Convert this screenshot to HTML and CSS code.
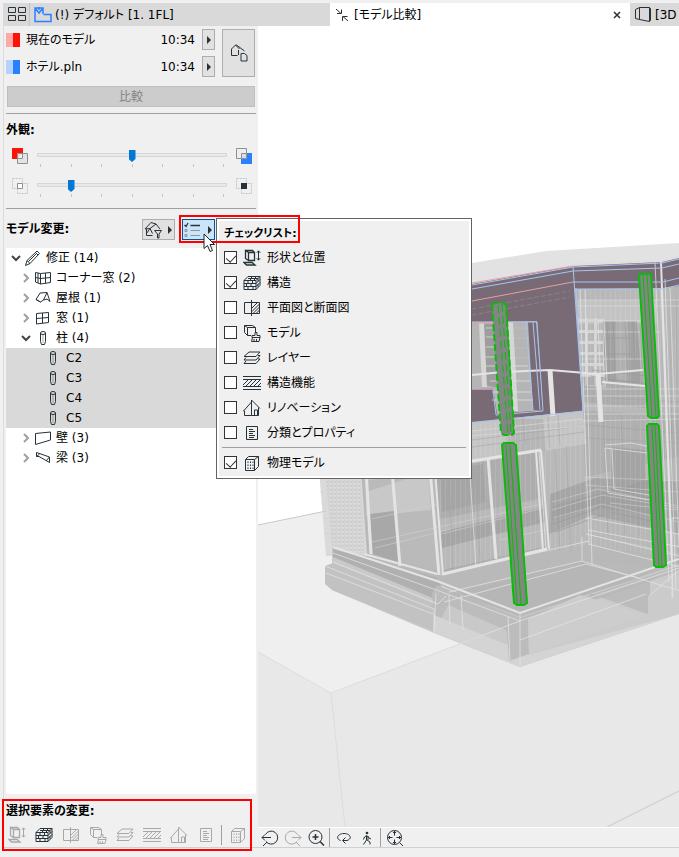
FILE: index.html
```
<!DOCTYPE html>
<html lang="ja">
<head>
  <meta charset="UTF-8">
  <meta name="viewport" content="width=device-width, initial-scale=1.0">
  <title>モデル比較</title>
  <link rel="stylesheet" href="styles.css">
</head>
<body>
  <!-- shared icons -->
  <svg class="sprite" aria-hidden="true">
    <symbol id="i-shape" viewBox="0 0 18 18"><path stroke-width="1.300" d="M5.500 3.500h6v8h-6zM5.500 3.500l-3-2v8l3 2M2.500 1.500h7l2 2M1 13.500h8l3 2.500H3.500z"/><path d="M15.500 2v9M13.800 3.800l1.700-2 1.700 2M13.800 9.200l1.700 2 1.700-2"/></symbol>
    <symbol id="i-brick" viewBox="0 0 18 18"><path d="M1 6.500h12v9H1zM1 9.500h12M1 12.500h12M5 6.500v3M9.500 6.500v3M3.500 9.500v3M8 9.500v3M5 12.500v3M10 12.500v3M1 6.500l4-4h12l-4 4M17 2.500v9l-4 4M5 4.500h10M9 2.500l-2 4M13 2.500l-2 4M13 9.500l4-4M13 12.500l4-4M15 4.500v3M15 10v3"/></symbol>
    <symbol id="i-plan" viewBox="0 0 18 18"><path d="M9 3.500H1.500v11H9M8.500 1v16M8.500 3.500h8v11h-8M9 9l5.500-5.500M9 12.500l7.500-7.500M10 14.500l6.500-6.500M13 14.500l3.500-3.500"/></symbol>
    <symbol id="i-model" viewBox="0 0 18 18"><path d="M8 11.500H4.500v-8h8V8M4.500 3.500l-3-2h8l3 2M1.500 1.500v7l3 3M12 8.500v3H9v2h8v-2h-3v-3zM9.500 13.500l-1 4H16l1-4M11 17v-2M13.500 17v-2"/></symbol>
    <symbol id="i-layer" viewBox="0 0 18 18"><path d="M1 7.500l5-4.500h11l-4 4.500zM3 8.500l-2 2.500h12l4-4.500h-2M3 12l-2 2.500h12l4-4.500h-2"/></symbol>
    <symbol id="i-func" viewBox="0 0 18 18"><path d="M0 2.500h18M0 5.500h18M0 12.500h18M0 15.500h18M0 11l5-5M3 12l6-6M7 12l6-6M11 12l6-6M15 12l3-3"/></symbol>
    <symbol id="i-reno" viewBox="0 0 18 18"><path d="M8.500 1v15.500H1.500V12h-1l8-9M8.500 1l8.500 8.500M15.500 8.500v8h-7M11.500 16v-5h3v5"/></symbol>
    <symbol id="i-list" viewBox="0 0 18 18"><path d="M3.500 2.500h11v13h-11zM6 5.500h4M6 7.500h6M6 9.500h4M6 11.500h6M6 13.500h5"/></symbol>
    <symbol id="i-phys" viewBox="0 0 18 18"><path d="M2.500 5.500h9v11h-9zM2.500 5.500l3-3h10l-4 3M15.500 2.500v10l-4 4"/><path stroke-dasharray="1.500 1.500" d="M5 7.500v8M7.500 7.500v8M10 7.500v8"/></symbol>
    <symbol id="i-column" viewBox="0 0 18 18"><path d="M6.500 4v8.500l1 3h3l1-3V4"/><ellipse cx="9" cy="4" rx="2.500" ry="1.500"/><path stroke-opacity=".4" d="M9 6v8"/></symbol>
    <symbol id="i-open" viewBox="0 0 10 10"><path stroke-width="2" d="M1 3l4 4 4-4"/></symbol>
    <symbol id="i-closed" viewBox="0 0 10 10"><path stroke-width="2" d="M3 1l4 4-4 4"/></symbol>
    <symbol id="i-arrow" viewBox="0 0 6 8"><path class="solid" d="M1 0l4 4-4 4z"/></symbol>
  </svg>

  <nav class="tabs">
    <button class="tab-grid" aria-label="タブ一覧">
      <svg width="18" height="15" viewBox="0 0 18 15"><path d="M.5.5h7v5h-7zM10.500.5h7v5h-7zM.5 8.500h7v5h-7zM10.500 8.500h7v5h-7z"/></svg>
    </button>
    <a href="#" class="tab">
      <svg class="blue" width="18" height="18" viewBox="0 0 18 18"><path stroke-width="1.500" d="M9 8V2H1v13.500h16V8.500H9.500M1 2l4 5 4-5M5 1v3"/></svg>
      <span>(!) デフォルト [1. 1FL]</span>
    </a>
    <div class="tab active">
      <svg width="16" height="16" viewBox="0 0 16 16"><path d="M2 2l5 4.500M7.500 2.500v4H3M14 14L9 9.500M13.500 9.500h-5v4.500"/></svg>
      <span>[モデル比較]</span>
      <button class="tab-close" aria-label="閉じる"><svg width="8" height="8" viewBox="0 0 8 8"><path stroke-width="1.500" d="M1 1l6 6M7 1L1 7"/></svg></button>
    </div>
    <a href="#" class="tab tab-last">
      <svg width="18" height="18" viewBox="0 0 18 18"><path d="M1.500 3.500l4-2h10v14l-10-2-4-1zM5.500 1.500v12M15.500 1.500l1 1v12l-1 1"/></svg>
      <span>[3D</span>
    </a>
  </nav>

  <main class="workspace">
    <aside class="panel">
      <div class="models">
        <div class="model">
          <i class="swatch red"></i><span class="name">現在のモデル</span><span>10:34</span>
          <button class="btn step" aria-label="現在のモデルを選択"><svg width="6" height="8"><use href="#i-arrow"/></svg></button>
        </div>
        <div class="model">
          <i class="swatch sky"></i><span class="name">ホテル.pln</span><span>10:34</span>
          <button class="btn step" aria-label="ファイルを選択"><svg width="6" height="8"><use href="#i-arrow"/></svg></button>
        </div>
        <button class="btn swap" aria-label="入れ替え">
          <svg width="18" height="18" viewBox="0 0 18 18"><path d="M1.500 11.500V5l4-4 4 4M1.500 11.500h6M8.500 11V6M5.500 1h1l8 6M11.500 9.500h3l2.500 2v5.500h-6v-7.500z"/></svg>
        </button>
      </div>
      <button class="btn compare" disabled>比較</button>

      <hr>
      <h2 class="look">外観:</h2>
      <div class="slider-row">
        <svg width="16" height="16" viewBox="0 0 16 16"><path fill="#ff1008" stroke="none" d="M0 0h11v5H5v6H0z"/><path fill="#e3e3e3" stroke="#8b9296" d="M5.500 5.500h10v10h-10zM5.500 10.500h5v-5"/></svg>
        <div class="slider">
          <input type="range" min="0" max="6" value="3" aria-label="モデルの色">
          <div class="ticks"><i></i><i></i><i></i><i></i><i></i><i></i><i></i></div>
        </div>
        <svg width="16" height="16" viewBox="0 0 16 16"><path fill="#2b80ff" stroke="none" d="M5 5h11v11H5z"/><path fill="#eee" stroke="#8b9296" d="M.5.5h10v10H.5z"/><path fill="#ddd" stroke="#8b9296" d="M5.500 5.500h5v5h-5z"/></svg>
      </div>
      <div class="slider-row">
        <svg width="16" height="16" viewBox="0 0 16 16"><path stroke="#c4c4c4" stroke-dasharray="2 1" d="M.5.5h10v10H.5zM5.500 5.500h10v10h-10z"/><path fill="#fff" stroke="#8b9296" d="M5.500 5.500h5v5h-5z"/></svg>
        <div class="slider">
          <input type="range" min="0" max="6" value="1" aria-label="共通部分の濃さ">
          <div class="ticks"><i></i><i></i><i></i><i></i><i></i><i></i><i></i></div>
        </div>
        <svg width="16" height="16" viewBox="0 0 16 16"><path stroke="#c4c4c4" stroke-dasharray="2 1" d="M.5.5h10v10H.5zM5.500 5.500h10v10h-10z"/><path fill="#263238" stroke="none" d="M5 5h6v6H5z"/></svg>
      </div>

      <hr class="second">
      <div class="changes">
        <h2>モデル変更:</h2>
        <button class="btn drop" aria-label="フィルター">
          <svg width="18" height="18" viewBox="0 0 18 18"><path d="M1 8l6-6.500L12 3l4 5M1 8l5-.5L12 3M6 7.500l2.500 5M2.500 8v6.500h6M6 7.500l-3.500 5M10.500 9.500h7l-2.500 3.500v4h-1.500v-4z"/></svg>
          <svg width="6" height="8"><use href="#i-arrow"/></svg>
        </button>
        <div class="anchor">
          <button class="btn drop on" aria-label="チェックリスト">
            <svg width="18" height="18" viewBox="0 0 18 18"><path stroke-width="1.300" d="M.5 4L2 5.500 4 2M6.500 4.500H16"/><path stroke="#87959d" d="M1 8.500h2v2H1zM1 13.500h2v2H1zM6.500 9.500H16M6.500 14.500H16"/></svg>
            <svg width="6" height="8"><use href="#i-arrow"/></svg>
          </button>
          <div class="menu">
            <h2>チェックリスト:</h2>
            <label><input type="checkbox" checked><svg><use href="#i-shape"/></svg>形状と位置</label>
            <label><input type="checkbox" checked><svg><use href="#i-brick"/></svg>構造</label>
            <label><input type="checkbox"><svg><use href="#i-plan"/></svg>平面図と断面図</label>
            <label><input type="checkbox"><svg><use href="#i-model"/></svg>モデル</label>
            <label><input type="checkbox"><svg><use href="#i-layer"/></svg>レイヤー</label>
            <label><input type="checkbox"><svg><use href="#i-func"/></svg>構造機能</label>
            <label><input type="checkbox"><svg><use href="#i-reno"/></svg>リノベーション</label>
            <label><input type="checkbox"><svg><use href="#i-list"/></svg>分類とプロパティ</label>
            <hr>
            <label><input type="checkbox" checked><svg><use href="#i-phys"/></svg>物理モデル</label>
          </div>
          <div class="mark mark-menu"></div>
          <svg class="cursor" width="13" height="20" viewBox="0 0 13 20"><path d="M1 1v14.500l3.500-3 2.500 6 2.500-1-2.500-6H11.500z"/></svg>
        </div>
      </div>

      <ul class="tree">
        <li><button aria-label="閉じる"><svg><use href="#i-open"/></svg></button><svg viewBox="0 0 18 18"><path d="M1.500 16.500l1.500-5L13 2l2.500 2.500L6 14.500zM3 11.500l3 3M11.500 3.500L14 6M4.500 12.500l8-8"/></svg>修正 (14)</li>
        <li class="l2 closed"><button aria-label="開く"><svg><use href="#i-closed"/></svg></button><svg viewBox="0 0 18 18"><path d="M1.500 3.500l5 1 10-1v10l-10 1.500-5-2zM6.500 4.500V15M11.500 4v10M1.500 8.500l5 1 10-1M4 4v10"/></svg>コーナー窓 (2)</li>
        <li class="l2 closed"><button aria-label="開く"><svg><use href="#i-closed"/></svg></button><svg viewBox="0 0 18 18"><path d="M2 10.500L6 4l7-.5L9.500 11l-3 2zM13 3.500l3 9-3-2.500-3.500 1M2 10.500l4.500 2.500"/></svg>屋根 (1)</li>
        <li class="l2 closed"><button aria-label="開く"><svg><use href="#i-closed"/></svg></button><svg viewBox="0 0 18 18"><path d="M2.500 4.500l12-1v10l-12 1.500zM8.500 4v10M2.500 9.500l12-1"/></svg>窓 (1)</li>
        <li class="l2"><button aria-label="閉じる"><svg><use href="#i-open"/></svg></button><svg><use href="#i-column"/></svg>柱 (4)</li>
        <li class="l3"><svg><use href="#i-column"/></svg>C2</li>
        <li class="l3"><svg><use href="#i-column"/></svg>C3</li>
        <li class="l3"><svg><use href="#i-column"/></svg>C4</li>
        <li class="l3"><svg><use href="#i-column"/></svg>C5</li>
        <li class="l2 closed"><button aria-label="開く"><svg><use href="#i-closed"/></svg></button><svg viewBox="0 0 18 18"><path d="M1.500 4.500L16.500 3v8l-15 4.500z"/></svg>壁 (3)</li>
        <li class="l2 closed"><button aria-label="開く"><svg><use href="#i-closed"/></svg></button><svg viewBox="0 0 18 18"><path d="M2.500 3.500l13 4.500v5.500L5 7.500H2.500zM2.500 7.500l3-2.500M12 12l3.500-4"/></svg>梁 (3)</li>
      </ul>

      <div class="selected">
        <h2>選択要素の変更:</h2>
        <div class="icons">
          <button disabled aria-label="形状と位置"><svg><use href="#i-shape"/></svg></button>
          <button aria-label="構造"><svg><use href="#i-brick"/></svg></button>
          <button disabled aria-label="平面図と断面図"><svg><use href="#i-plan"/></svg></button>
          <button disabled aria-label="モデル"><svg><use href="#i-model"/></svg></button>
          <button disabled aria-label="レイヤー"><svg><use href="#i-layer"/></svg></button>
          <button disabled aria-label="構造機能"><svg><use href="#i-func"/></svg></button>
          <button disabled aria-label="リノベーション"><svg><use href="#i-reno"/></svg></button>
          <button disabled aria-label="分類とプロパティ"><svg><use href="#i-list"/></svg></button>
          <i class="sep"></i>
          <button disabled aria-label="物理モデル"><svg><use href="#i-phys"/></svg></button>
        </div>
        <div class="mark mark-selected"></div>
      </div>
    </aside>

    <section class="view">
      <div class="scene">
        <svg viewBox="258 26 421 801" preserveAspectRatio="xMinYMin slice">
          <defs>
            <pattern id="mesh" width="4" height="4" patternUnits="userSpaceOnUse"><path d="M0 0l4 3M0 3l4-2" stroke="#cbcbcb" fill="none"/></pattern>
            <pattern id="slats" width="5" height="4" patternUnits="userSpaceOnUse"><path d="M.5 0v4" stroke="#fff" stroke-opacity=".1" fill="none"/></pattern>
            <pattern id="blocks" width="9" height="11" patternUnits="userSpaceOnUse"><path d="M0 1.500h9M1.500 0v11" stroke="#d4d4d4" stroke-width="3" fill="none"/></pattern>
          </defs>
          <g stroke="none">
            <!-- ground -->
            <path fill="#efefef" d="M258 525l68-14 353-60v118L331 693l-73-41z"/>
            <path fill="#e8e8e8" d="M258 652l73 41 189-72 159-60v266H258z"/>
            <!-- roof slab -->
            <path fill="#e2e2e2" d="M400 276l72-13 74-12 133-8v16l-17 4-89 3-101 19z"/>
            <!-- house volume -->
            <path fill="#b9b9b9" d="M320 470l152-48 111-11 96 0v155l-159 52-83-34-105-29z"/>
            <path fill="#b8b8b8" d="M575 288h88l16-3v285l-87-10z"/>
            <path fill="#dadada" d="M319 470h42l6 86-34-8v8h-7z"/>
            <path fill="url(#mesh)" d="M325 470h35l5 84-33-7z"/>
            <path fill="#bababa" d="M362 470h68l7 99-67-15z"/>
            <path fill="#c8c8c8" d="M366 492l62-20 3 38-65 6z"/>
            <path fill="#a8a8a8" d="M370 514l24-3 4 51-25-8z"/>
            <path fill="#adadad" d="M436 470l102-18 8 96-103 24z"/>
            <path fill="#a5a5a5" d="M440 472l43-8 3 38-44 10z"/>
            <path fill="#b9b9b9" d="M440 519l103-21 4 48-104 24z"/>
            <path fill="#a6a6a6" d="M441 532l102-25 2 15-103 26z"/>
            <path fill="#a6a6a6" d="M550 494l45-16 84 3v53l-87-19-43 19z"/>
            <path fill="#b0b0b0" d="M583 411l96 4v42l-94 20z"/>
            <path fill="#c5c5c5" d="M472 422l111-11 3 33-114 19z"/>
            <path fill="#b6b6b6" d="M507 419h36l3 32-37 3z"/>
            <path fill="#c3c3c3" d="M577 300h80v24h-79z"/>
            <path fill="url(#blocks)" d="M577 318h27l2 70-25-3z"/>
            <path fill="#a2a2a2" d="M603 321h34l5 62-37-2z"/>
            <path fill="#b0b0b0" d="M616 321h12l1 61h-13z"/>
            <path fill="#a4a4a4" d="M612 447l33 3 1 45-35-5z"/>
            <path fill="#929292" fill-opacity=".3" d="M582 376l74 8v25l-72-7zM553 506l102-28v37l-63-8-40 13z"/>
            <path fill="url(#slats)" d="M436 425l244-11v145l-90-14-150 25zM577 290h102v120h-98z"/>
            <!-- fascia -->
            <path fill="#796b76" d="M400 297l72-13 101-18 89-4 17-4v28l-16 2-88 1 8 122-183 18z"/>
            <path fill="#b5b5b5" d="M472 322l65-1 6 89-46 4-4-26-21 1z"/>
            <path fill="#9d9d9d" d="M484 324h12l2 64-12-3z"/>
            <path fill="#d6d6d6" d="M479 323h5l3 64h-5zM508 322h5l5 89h-5z"/>
            <path fill="#796b76" d="M528 322h8l7 88h-10z"/>
            <!-- base plates -->
            <path fill="#c9c9c9" d="M332 547l105 38 83 32 159-53v50l-159 53-86-34-102-43z"/>
            <path fill="#c2c2c2" d="M325 566l8-3 101 41v27l-102-41-7-6z"/>
            <path fill="#b0b0b0" d="M333 549l104 29 10 20-12 1-102-42z"/>
            <path fill="#bcbcbc" d="M437 585l83 33 159-52v14l-159 56-72-31-13 26-3-38z"/>
            <path fill="#d4d4d4" d="M434 615l86 35 159-53v17l-159 53-86-34z"/>
            <path fill="#cbcbcb" d="M525 624l154-53v43l-151 41z"/>
            <path fill="#b5b5b5" fill-opacity=".7" d="M448 594l134-33 59 17-121 36zM590 600l60-20v35l-61-22z"/>
            <path fill="#bcbcbc" d="M506 620l22-2 1 36-20 7z"/>
            <path fill="#cdcdcd" d="M580 595l67 20-118 39-1-35z"/>
          </g>
          <!-- model edges -->
          <g fill="none" stroke="#c9c9c9">
            <path d="M258 525l68-14M607 827l72-36"/>
            <path stroke="#dcdcdc" d="M258 652l73 41 189-72M331 693l14 134"/>
            <path stroke="#d0d0d0" stroke-opacity=".6" d="M320 492l5 1M323 518l6 1M324 533l6 1M366 480l64-8M372 519l65-15M438 535l105-27M372 542l170-38M375 548l76-19M500 540l45-10M552 502l46-13 81 17M552 510l50-15 77 13M553 518l49-14 77 18M585 477l94 4M585 485l94 7M610 503l69 7M590 535l89 19"/>
            <path stroke="#a2a2a2" stroke-opacity=".5" d="M472 440l110-14M472 447l112-15M507 449l-2-29M525 445l-2-28M550 448l-2-31M560 446l-2-31M566 446l5 105M555 449l5 102M603 415l5 120M621 415l4 120M635 415l4 120M670 290l3 274M676 290l3 274M612 398l67 4M585 425l94 8M585 438l94 5M449 480l4 90M475 465l5 95M517 455l6 78"/>
            <path stroke="#ddd" stroke-opacity=".6" d="M578 300h101M578 306h101M580 332h80M582 359h75M584 389h95M584 396h95M584 406h95M584 414h95M582 421l97-2M472 431l111-12M472 436l112-10"/>
            <path stroke="#9a9a9a" stroke-opacity=".7" d="M607 322l3 61M613 322l3 61M625 322l3 61M633 322l3 61M604 338h28M604 354h28M640 322l3 61M592 370l64 7M590 376l62 9M553 524l46-16M555 532l47-17M610 512l45 10"/>
          </g>
          <g fill="none" stroke="#e4e4e4">
            <path stroke-width="3" d="M366 470l5 84M392 470l8 96M430 470l9 105M488 458l8 101M472 461l69-11M443 574l104-25"/>
            <path stroke-width="2" d="M364 554l73 20M435 470l8 105M536 451l7 99M541 450l8 99M333 547l104 34 83 32 159-54"/>
            <path stroke-opacity=".75" d="M539 451l7 99M441 575l108-25 40-9M333 553l106 38 81 30 159-53M449 592l133-31 98 30M444 602l142-38 53 14M325 566l109 43v23M326 573l107 41M333 562l105 42 8-8M461 595l2 35M508 617l2 43M520 613v53M520 640l126-46M588 544l93 23M586 518l93 16M586 534l93 22M588 530l93 17M582 537v24M470 475l6 92"/>
            <path stroke-opacity=".75" d="M585 289l7 275M580 289l9 255M655 262l14 320M661 288l12 310M665 279l11 310M670 288l9 260M598 321h42M598 321l3 72M604 321l3 60M602 382l44 4M605 448l42 5M605 448l3 45 41 7M612 449l2 40 35 6M605 445l26-2 20 4M672 518h7M672 518v80M679 570l-30 26v19M436 593l-2 38M449 595l1 30"/>
            <path stroke-width="2" d="M472 375l31-3 47-2 47 4 46-4M602 382l43 4M661 262l11 300"/>
            <path stroke-width="5" d="M550 370l3 46M598 374l3 48"/>
            <path stroke-dasharray="3 1" stroke-width="3" d="M646 370l3 46"/>
            <path stroke-opacity=".7" d="M486 328h20M486 337h20M486 347h20M486 357h20M486 366h42M490 381h41M492 392h40M492 400h41"/>
            <path stroke="#bdbdbd" d="M515 328h12M515 338h12M515 348h12M515 358h12"/>
          </g>
          <g fill="none" stroke="#a9c4ee">
            <path d="M472 285l101-18 89-4 17-4M472 289l101-18 89-3 17-4M573 282h90l16-4M575 289h87l17-4M472 322h65l6 89-47 4-3-26h-21M526 322l7 88M533 322l7 88M573 266l10 145M576 288l7 124M472 423l111-12"/>
            <path stroke="#e2a0a4" d="M472 283l101-17M472 301l101-19M472 389h21M472 323h20"/>
            <path stroke="#e6dada" stroke-dasharray="6 3" d="M573 264l89-3 17-5"/>
            <path stroke="#8b7f89" stroke-dasharray="5 2" d="M472 309l98-18M472 315l98-18"/>
          </g>
          <!-- columns -->
          <g class="columns">
            <path stroke-dasharray="7 3" d="M492 305l3-2h8l3 2 8 128-2 2h-8l-3-2z"/>
            <path d="M502 445l2-2h9l3 2 11 158-3 2h-7l-3-2z"/>
            <path d="M639 275l2-1h8l2 1 8 141-2 2h-6l-3-2z"/>
            <path d="M647 426l2-2h8l2 2 7 139-3 2h-7l-2-2z"/>
            <path class="rib" d="M506 445l11 159M510 445l11 159M643 275l9 142M647 275l9 142M652 425l7 141M655 425l7 141M506 303l8 130"/>
            <path class="rib" stroke-dasharray="8 4" d="M498 305l10 129M502 304l9 129"/>
          </g>
        </svg>
      </div>
      <div class="nav-bar">
        <button aria-label="前の表示"><svg viewBox="0 0 18 18"><path d="M5 12.500a6.500 6.500 0 1 0-.5-7M1 8.500h9M4 5.500l-3 3 3 3M6 13l-4 4"/></svg></button>
        <button aria-label="次の表示" disabled><svg viewBox="0 0 18 18"><path d="M13 12.500a6.500 6.500 0 1 1 .5-7M17 8.500H8M14 5.500l3 3-3 3M12 13l4 4"/></svg></button>
        <button aria-label="拡大"><svg viewBox="0 0 18 18"><circle cx="8.500" cy="8" r="6.500"/><path stroke-width="1.500" d="M5.500 8h6M8.500 5v6M13 12.500l4 4"/></svg></button>
        <i class="sep"></i>
        <button aria-label="オービット"><svg viewBox="0 0 18 18"><path d="M5.500 11.500C0 9.500 3 4.500 9 4.500s9 5 3 7H8M10.500 8.500l-3 3 3 3"/></svg></button>
        <button aria-label="ウォーク"><svg viewBox="0 0 18 18"><circle class="solid" cx="9" cy="4" r="1.300"/><path d="M8.500 7v4l-3 4.500M9 11l3 2v2.500M5.500 10.500l1-2.500L9 6.500l2 2.500 2 1M10 7v4"/></svg></button>
        <i class="sep"></i>
        <button aria-label="全体表示"><svg viewBox="0 0 18 18"><circle cx="8.500" cy="8.500" r="7"/><path d="M8.500 2v4.500M8.500 10.500V15M2 8.500h4.500M10.500 8.500H15M13.500 13.500l3.500 3.500M7 4l1.500-1.500L10 4M7 13l1.500 1.500L10 13M4 7L2.500 8.500 4 10M13 7l1.500 1.500L13 10"/></svg></button>
      </div>
    </section>
  </main>
  <footer class="status"></footer>
</body>
</html>
```
FILE: styles.css
```
* {
  box-sizing: border-box;
}

body {
  display: flex;
  flex-direction: column;
  min-height: 100vh;
  margin: 0;
  padding: 3px 0 0 3px;
  background: #f0f0f0;
  color: #000;
  font-family: "DejaVu Sans", "Noto Sans CJK JP", sans-serif;
  font-size: 12px;
  line-height: 20px;
  font-feature-settings: "palt";
  overflow-x: hidden;
}

button {
  display: flex;
  align-items: center;
  justify-content: center;
  padding: 0;
  border: none;
  background: none;
  color: inherit;
  font: inherit;
}

h2 {
  margin: 0;
  font-size: 12px;
  font-weight: bold;
}

hr {
  width: 100%;
  height: 1px;
  margin: 6px 0;
  border: none;
  background: #a0a0a0;
}

svg {
  flex: none;
  fill: none;
  stroke: #263238;
}

.solid {
  fill: #263238;
  stroke: none;
}

.sprite {
  position: absolute;
  width: 0;
  height: 0;
}

.sep {
  width: 1px;
  background: #a0a0a0;
}

/* tabs */
.tabs {
  display: flex;
  height: 23px;
  padding-left: 1px;
  background: #d9d9d9;
  overflow: hidden;
}

.tab-grid {
  flex: none;
  width: 26px;
  border-right: 1px solid #c3c3c3;
}

.tab {
  display: flex;
  flex: 0 0 300px;
  align-items: center;
  gap: 3px;
  padding-left: 4px;
  color: #000;
  text-decoration: none;
  white-space: nowrap;
}

.tab.active {
  gap: 4px;
  background: #fff;
}

.tab-last {
  flex: 1;
}

.tab-close {
  width: 26px;
  margin-left: auto;
}

.blue {
  stroke: #2b80ff;
}

/* layout */
.workspace {
  display: grid;
  flex: 1;
  grid-template-columns: 255px 1fr;
}

.panel {
  display: flex;
  flex-direction: column;
  padding: 3px 2px 0;
  border-left: 1px solid #dcdcdc;
}

.status {
  height: 10px;
  border-top: 1px solid #d0d0d0;
}

.btn {
  height: 21px;
  border: 1px solid #adadad;
  background: #e1e1e1;
}

/* compared models */
.models {
  display: grid;
  grid-template-columns: 1fr 33px;
  gap: 6px 7px;
  padding-right: 1px;
}

.model {
  display: flex;
  grid-column: 1;
  align-items: center;
}

.name {
  flex: 1;
}

.swatch {
  width: 14px;
  height: 14px;
  margin-right: 6px;
}

.swatch.red {
  background: linear-gradient(90deg, #ffa9a7 50%, #ff1008 50%);
}

.swatch.sky {
  background: linear-gradient(90deg, #b5d3ff 50%, #2b80ff 50%);
}

.step {
  width: 13px;
  margin-left: 7px;
}

.swap {
  grid-column: 2;
  grid-row: 1 / 3;
  height: auto;
}

.compare {
  margin: 9px 1px 0;
  border-color: #bfbfbf;
  background: #ccc;
  color: #838383;
}

.look {
  line-height: 20px;
}

/* sliders */
.slider-row {
  display: flex;
  gap: 9px;
  height: 30px;
  padding: 8px 4px 0 6px;
}

.slider {
  flex: 1;
}

.slider input {
  display: block;
  width: 100%;
  height: 12px;
  margin: 2px 0;
  appearance: none;
  background:
    linear-gradient(#e7eaea, #e7eaea) 1px 4px / 188px 2px no-repeat,
    linear-gradient(#d6d6d6, #d6d6d6) 0 3px / 100% 4px no-repeat;
}

.slider input::-webkit-slider-thumb {
  width: 7px;
  height: 12px;
  appearance: none;
  background: #0078d7;
  clip-path: polygon(0 0, 100% 0, 100% 75%, 50% 100%, 0 75%);
}

.ticks {
  display: flex;
  justify-content: space-between;
  padding: 0 3px;
}

.ticks i {
  width: 1px;
  height: 3px;
  background: #c4c4c4;
}

/* model changes */
.second {
  margin: 8px 0 10px;
}

.changes {
  display: flex;
  gap: 7px;
  margin-bottom: 8px;
  padding-right: 41px;
}

.changes > h2 {
  flex: 1;
}

.drop {
  gap: 5px;
  width: 33px;
}

.drop.on {
  border-color: #005499;
  background: #cce4f7;
}

.anchor {
  position: relative;
  z-index: 2;
}

.menu {
  position: absolute;
  top: -1px;
  left: 34px;
  width: 256px;
  padding: 3px 5px 3px;
  border: 1px solid #646464;
  background: #f0f0f0;
  box-shadow: inset 0 0 0 2px #fff;
}

.menu h2 {
  padding: 0 2px;
  font-size: 11px;
  line-height: 23px;
}

.menu label {
  display: flex;
  align-items: center;
  height: 25px;
  padding-left: 2px;
}

.menu label svg {
  width: 18px;
  height: 18px;
  margin: 0 6px;
}

.menu hr {
  margin: 2px 0;
}

.menu input {
  position: relative;
  width: 13px;
  height: 13px;
  margin: 0;
  border: 1px solid #333;
  appearance: none;
  background: #fff;
}

.menu input:checked::before {
  content: "";
  position: absolute;
  top: 1px;
  left: 3px;
  width: 5px;
  height: 8px;
  border: solid #333;
  border-width: 0 1px 1px 0;
  transform: rotate(42deg);
}

.mark {
  position: absolute;
  border: 2px solid #f00;
  pointer-events: none;
}

.mark-menu {
  top: -4px;
  left: -3px;
  width: 121px;
  height: 28px;
}

.cursor {
  position: absolute;
  top: 14px;
  left: 21px;
  fill: #fff;
  stroke: #222;
}

/* tree */
.tree {
  flex: 1;
  margin: 0;
  padding: 0;
  background: #fff;
  list-style: none;
}

.tree li {
  display: flex;
  align-items: center;
  height: 20px;
  padding-left: 5px;
}

.tree li.l2 {
  padding-left: 15px;
}

.tree li.l3 {
  padding-left: 38px;
  background: #d9d9d9;
}

.tree li > svg {
  width: 18px;
  height: 18px;
  margin-right: 4px;
}

.tree button {
  margin-right: 3px;
}

.tree button svg {
  width: 10px;
  height: 10px;
  stroke: #444;
}

.tree .closed button svg {
  stroke: #a0a0a0;
}

/* changes of the selected element */
.selected {
  position: relative;
  z-index: 1;
  padding: 7px 0 2px;
}

.icons {
  display: flex;
  height: 20px;
  margin: 4px 0 0 -3px;
}

.icons button {
  width: 27px;
}

.icons .sep {
  margin: 0 2px;
}

.icons svg,
.nav-bar svg {
  width: 18px;
  height: 18px;
}

button:disabled svg {
  stroke: #a8a8a8;
}

.mark-selected {
  top: 5px;
  left: -4px;
  width: 250px;
  height: 52px;
}

/* 3D view */
.view {
  display: flex;
  flex-direction: column;
  min-width: 0;
}

.scene {
  position: relative;
  flex: 1;
  background: #fff;
  overflow: hidden;
}

.scene svg {
  position: absolute;
  width: 100%;
  height: 100%;
}

.columns path {
  fill: #838783;
  stroke: #08bd08;
  stroke-width: 2;
}

.columns .rib {
  fill: none;
  stroke-width: 1;
}

.nav-bar {
  display: flex;
  height: 20px;
  border-top: 1px solid #fff;
}

.nav-bar button {
  width: 23px;
}

.nav-bar .sep {
  margin: 0 2px;
}
```
